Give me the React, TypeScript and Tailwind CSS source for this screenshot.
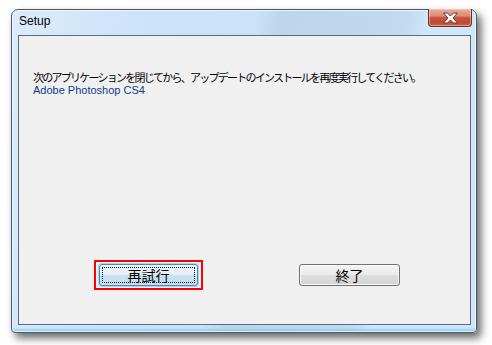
import React from "react";

export default function App() {
  return (
    <div className="w-[492px] h-[345px] bg-white overflow-hidden pl-[11px] pt-[9px]" style={{ fontFamily: '"Noto Sans CJK JP", "Liberation Sans", sans-serif' }}>
      <div className="w-[466px] h-[324px] rounded-t-[7px] rounded-b-[4px] border border-[#48596b] bg-[linear-gradient(100deg,#dcebfb_0%,#cee4f8_22%,#cbe2f7_47%,#bdd6ec_52%,#c2d9ee_76%,#d0e6fa_80%,#cfe6fb_100%)] flex flex-col pl-[6px] pr-[5px] pb-[7px] shadow-[inset_0_0_0_1px_rgba(255,255,255,0.7),inset_0_-3px_2px_rgba(120,200,245,0.6),4px_5px_8px_rgba(0,0,0,0.6)]">
        <div className="h-[25px] flex items-start justify-between shrink-0">
          <div className="pt-[3px] pl-[1px] text-[12px] leading-[16px] text-black" style={{ fontFamily: '"Liberation Sans", sans-serif' }}>Setup</div>
          <div className="-mt-[1px] mr-[-1px] w-[44px] h-[18px] rounded-b-[4px] border border-t-0 border-[#7b2d1f] bg-[linear-gradient(#ebb0a0_0%,#dc8a74_40%,#c5533a_52%,#c04a31_80%,#d0664c_100%)] shadow-[inset_0_0_0_1px_rgba(255,220,210,0.45)] flex items-center justify-center">
            <svg width="17" height="12" viewBox="0 0 17 12">
              <path d="M1.5 1 H5.5 L8.5 4 L11.5 1 H15.5 L11 6 L15.5 11 H11.5 L8.5 8 L5.5 11 H1.5 L6 6 Z" fill="#ffffff" stroke="#5a3a35" strokeWidth="1" strokeLinejoin="round" />
            </svg>
          </div>
        </div>
        <div className="flex-1 border border-[#5b6b7c] bg-[#f0f0f0] flex flex-col">
          <div className="pl-[14px] pt-[34px]">
            <div className="text-[11px] leading-[14px] tracking-[-1.75px] text-black whitespace-nowrap">次のアプリケーションを閉じてから、アップデートのインストールを再度実行してください。</div>
            <div className="text-[11px] leading-[13px] text-[#123a8f]" style={{ fontFamily: '"Liberation Sans", sans-serif' }}>Adobe Photoshop CS4</div>
          </div>
          <div className="flex-1" />
          <div className="flex items-center pl-[75px] pb-[34px]">
            <div className="w-[109px] h-[30px] border-2 border-[#ff0000] flex items-center justify-center">
              <div className="w-[99px] h-[22px] rounded-[3px] border border-[#3c8fc4] shadow-[0_0_0_1px_rgba(110,200,240,0.6)] bg-[linear-gradient(#eef6fb_0%,#e2eff8_48%,#c9e1f0_52%,#c3deee_100%)] p-[2px]">
                <div className="w-full h-full border border-dotted border-black flex items-center justify-center text-[14px] leading-none text-black">再試行</div>
              </div>
            </div>
            <div className="ml-[96px] w-[101px] h-[22px] rounded-[3px] border border-[#707070] shadow-[inset_0_0_0_1px_rgba(255,255,255,0.8)] bg-[linear-gradient(#f3f3f3_0%,#ebebeb_48%,#dddddd_52%,#d3d3d3_100%)] flex items-center justify-center text-[14px] leading-none text-black">終了</div>
          </div>
        </div>
      </div>
    </div>
  );
}
